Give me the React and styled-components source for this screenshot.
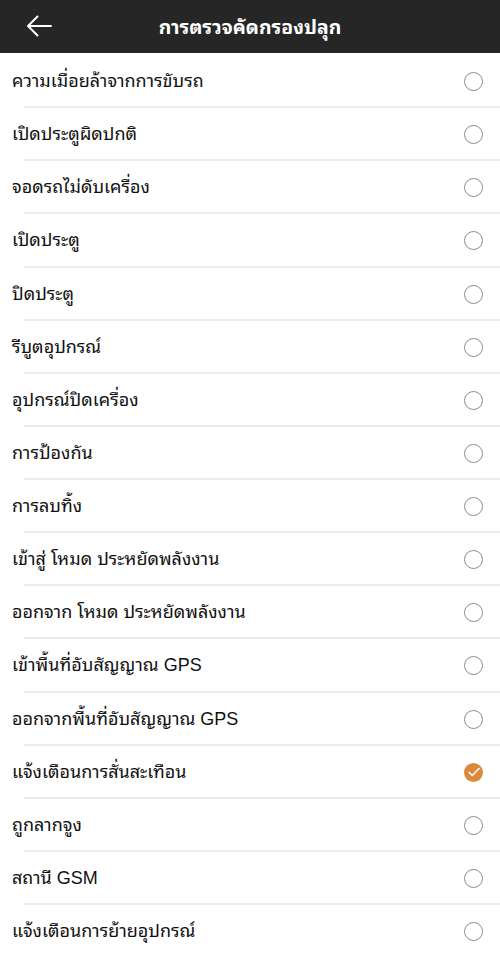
import React, { useState } from "react";
import styled, { createGlobalStyle } from "styled-components";

const GlobalStyle = createGlobalStyle`
  body {
    margin: 0;
    background: #fff;
    font-family: "Liberation Sans", "Noto Sans Thai Looped", "Noto Sans Thai", sans-serif;
  }
`;

const items = [
  "ความเมื่อยล้าจากการขับรถ",
  "เปิดประตูผิดปกติ",
  "จอดรถไม่ดับเครื่อง",
  "เปิดประตู",
  "ปิดประตู",
  "รีบูตอุปกรณ์",
  "อุปกรณ์ปิดเครื่อง",
  "การป้องกัน",
  "การลบทิ้ง",
  "เข้าสู่ โหมด ประหยัดพลังงาน",
  "ออกจาก โหมด ประหยัดพลังงาน",
  "เข้าพื้นที่อับสัญญาณ GPS",
  "ออกจากพื้นที่อับสัญญาณ GPS",
  "แจ้งเตือนการสั่นสะเทือน",
  "ถูกลากจูง",
  "สถานี GSM",
  "แจ้งเตือนการย้ายอุปกรณ์"
];

const App = () => {
  const [checked, setChecked] = useState({ 13: true });

  const toggle = index => {
    setChecked(prev => ({ ...prev, [index]: !prev[index] }));
  };

  return (
    <Screen>
      <GlobalStyle />
      <Header>
        <BackButton>
          <svg width="26" height="22" viewBox="0 0 26 22" fill="none">
            <path d="M2 11H25M11.5 1.5L2 11l9.5 9.5" stroke="#fff" strokeWidth="2" strokeLinecap="round" strokeLinejoin="round" />
          </svg>
        </BackButton>
        <Title>การตรวจคัดกรองปลุก</Title>
      </Header>
      <List>
        {items.map((label, index) => (
          <Row key={index} onClick={() => toggle(index)} $first={index === 0}>
            <Label>{label}</Label>
            <Check $active={!!checked[index]}>
              {checked[index] && (
                <svg width="12" height="10" viewBox="0 0 12 10" fill="none">
                  <path d="M1 5.2l3.3 3.3L11 1.5" stroke="#fff" strokeWidth="1.5" strokeLinecap="round" strokeLinejoin="round" />
                </svg>
              )}
            </Check>
          </Row>
        ))}
      </List>
    </Screen>
  );
};

const Screen = styled.div`
  width: 500px;
  min-height: 954px;
  background: #fff;
`;

const Header = styled.div`
  height: 53px;
  background: #262626;
  display: flex;
  align-items: center;
  justify-content: center;
  position: relative;
`;

const BackButton = styled.div`
  position: absolute;
  left: 26px;
  top: 15px;
  display: flex;
`;

const Title = styled.div`
  color: #fff;
  font-size: 19.4px;
  font-weight: 700;
  margin-bottom: 3px;
`;

const List = styled.div`
  display: flex;
  flex-direction: column;
`;

const Row = styled.div`
  height: 53.13px;
  flex-shrink: 0;
  box-sizing: border-box;
  display: flex;
  align-items: center;
  justify-content: space-between;
  padding: 4px 17px 0 12px;
  position: relative;
  cursor: pointer;

  &::before {
    content: "";
    display: ${({ $first }) => ($first ? "none" : "block")};
    position: absolute;
    left: 24px;
    right: 0;
    top: 0;
    height: 2px;
    background: #ececec;
  }
`;

const Label = styled.span`
  font-size: 18px;
  color: #111;
  margin-bottom: 5px;
`;

const Check = styled.div`
  width: 19px;
  height: 19px;
  box-sizing: border-box;
  border-radius: 50%;
  border: ${({ $active }) => ($active ? "none" : "1.5px solid #8c8c8c")};
  background: ${({ $active }) => ($active ? "#d98a3d" : "transparent")};
  display: flex;
  align-items: center;
  justify-content: center;
`;

export default App;
